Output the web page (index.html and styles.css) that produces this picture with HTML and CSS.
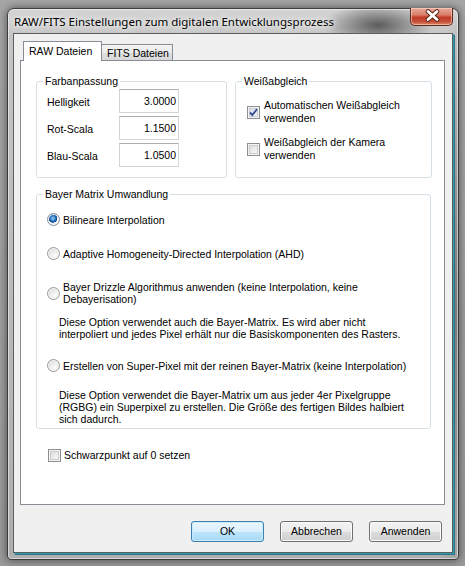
FILE: index.html
```html
<!DOCTYPE html>
<html lang="de">
<head>
<meta charset="utf-8">
<title>RAW/FITS Einstellungen</title>
<link rel="stylesheet" href="styles.css">
</head>
<body>
<div class="window">
  <div class="titlebar">
    <span class="title">RAW/FITS Einstellungen zum digitalen Entwicklungsprozess</span>
    <div class="close">
      <svg width="43" height="18" viewBox="0 0 43 18">
        <path d="M17 4.5 L26 12.5 M26 4.5 L17 12.5" stroke="#5a2418" stroke-width="4.8" stroke-linecap="round"/>
        <path d="M17 4.5 L26 12.5 M26 4.5 L17 12.5" stroke="#ffffff" stroke-width="2.8" stroke-linecap="round"/>
      </svg>
    </div>
  </div>
  <div class="client">
    <div class="tabs">
      <div class="tab active">RAW Dateien</div>
      <div class="tab">FITS Dateien</div>
    </div>
    <div class="panel">
      <div class="row">
        <fieldset class="group g-farb">
          <legend>Farbanpassung</legend>
          <div class="fields">
            <label class="flabel">Helligkeit</label><div class="input">3.0000</div>
            <label class="flabel">Rot-Scala</label><div class="input">1.1500</div>
            <label class="flabel">Blau-Scala</label><div class="input">1.0500</div>
          </div>
        </fieldset>
        <fieldset class="group g-weiss">
          <legend>Weißabgleich</legend>
          <div class="checks">
            <div class="check">
              <span class="box checked">
                <svg width="11" height="11" viewBox="0 0 11 11"><path d="M2 5.5 L4.3 8 L9 2.2" fill="none" stroke="#3a4f95" stroke-width="1.9"/></svg>
              </span>
              <span class="ctext">Automatischen Weißabgleich<br>verwenden</span>
            </div>
            <div class="check second">
              <span class="box"></span>
              <span class="ctext">Weißabgleich der Kamera<br>verwenden</span>
            </div>
          </div>
        </fieldset>
      </div>
      <fieldset class="group g-bayer">
        <legend>Bayer Matrix Umwandlung</legend>
        <div class="radios">
          <div class="radio r1"><span class="dot on"></span><span>Bilineare Interpolation</span></div>
          <div class="radio r2"><span class="dot"></span><span>Adaptive Homogeneity-Directed Interpolation (AHD)</span></div>
          <div class="radio r3"><span class="dot"></span><span>Bayer Drizzle Algorithmus anwenden (keine Interpolation, keine<br>Debayerisation)</span></div>
          <p class="desc d1">Diese Option verwendet auch die Bayer-Matrix. Es wird aber nicht<br>interpoliert und jedes Pixel erhält nur die Basiskomponenten des Rasters.</p>
          <div class="radio r4"><span class="dot"></span><span>Erstellen von Super-Pixel mit der reinen Bayer-Matrix (keine Interpolation)</span></div>
          <p class="desc d2">Diese Option verwendet die Bayer-Matrix um aus jeder 4er Pixelgruppe<br>(RGBG) ein Superpixel zu erstellen. Die Größe des fertigen Bildes halbiert<br>sich dadurch.</p>
        </div>
      </fieldset>
      <div class="check schwarz">
        <span class="box"></span>
        <span class="ctext">Schwarzpunkt auf 0 setzen</span>
      </div>
    </div>
    <div class="buttons">
      <div class="btn default">OK</div>
      <div class="btn">Abbrechen</div>
      <div class="btn">Anwenden</div>
    </div>
  </div>
</div>
</body>
</html>
```
FILE: styles.css
```css
html, body {
  margin: 0;
  padding: 0;
}
body {
  width: 465px;
  height: 566px;
  overflow: hidden;
  background: linear-gradient(to bottom, #a6a6a6, #9a9a9a);
  font-family: "Liberation Sans", Arial, sans-serif;
  font-size: 10.5px;
  color: #000;
}
.window {
  position: relative;
  box-sizing: border-box;
  width: 452px;
  height: 552px;
  margin: 8px 0 0 7px;
  border: 1px solid #3c3c3c;
  border-radius: 7px 7px 4px 4px;
  padding: 0 5px 6px 5px;
  display: flex;
  flex-direction: column;
  background:
    radial-gradient(ellipse 55px 22px at 370px 16px, rgba(55,55,55,0.75), rgba(55,55,55,0) 100%),
    radial-gradient(ellipse 40px 300px at 452px 300px, rgba(60,60,60,0.55), rgba(60,60,60,0) 100%),
    linear-gradient(to bottom, #d3d3d3 0, #c4c4c4 30px, #b9b9b9 300px, #aeaeae 100%);
  box-shadow: 0 0 9px rgba(0,0,0,0.55), inset 0 0 0 1px rgba(255,255,255,0.5);
}
.titlebar {
  height: 24px;
  display: flex;
  align-items: center;
  padding-left: 1px;
}
.title {
  font-family: "Noto Sans", "Open Sans", sans-serif;
  font-size: 11.5px;
  color: #000;
  text-shadow: 0 0 5px #fff, 0 0 9px rgba(255,255,255,0.9), 0 0 14px rgba(255,255,255,0.7);
}
.close {
  position: absolute;
  top: -1px;
  right: 5px;
  width: 43px;
  height: 18px;
  box-sizing: border-box;
  border: 1px solid #5b2a22;
  border-top: none;
  border-radius: 0 0 5px 5px;
  background: linear-gradient(to bottom, #eaa999 0, #d9806c 40%, #c23c27 55%, #c44e36 80%, #de8a68 100%);
  box-shadow: inset 0 0 0 1px rgba(255,220,210,0.55);
}
.close svg {
  display: block;
  margin-top: -1px;
}
.client {
  flex: 1;
  border: 1px solid #5d5d5d;
  background: #f0f0f0;
  padding: 7px 0 0 6px;
  display: flex;
  flex-direction: column;
  box-shadow: 1px 1px 0 #2f9aab, 2px 2px 0 #2b7584;
}
.tabs {
  display: flex;
  align-items: flex-end;
  height: 20px;
  margin: 0 0 -1px 3px;
  position: relative;
  z-index: 1;
}
.tab {
  box-sizing: border-box;
  border: 1px solid #898c95;
  white-space: nowrap;
}
.tab.active {
  width: 79px;
  height: 20px;
  border-bottom: none;
  background: #fff;
  padding: 3px 0 0 5px;
  line-height: 13px;
  position: relative;
  z-index: 2;
}
.tab:not(.active) {
  width: 72px;
  height: 17px;
  margin-left: -1px;
  background: linear-gradient(to bottom, #f3f3f3 0, #ebebeb 50%, #dedede 51%, #d9d9d9 100%);
  padding: 2px 0 0 5px;
  line-height: 13px;
}
.panel {
  box-sizing: border-box;
  width: 425px;
  height: 445px;
  border: 1px solid #898c95;
  background: #fff;
  padding: 14px 0 0 15px;
}
.row {
  display: flex;
  gap: 8px;
}
.group {
  box-sizing: border-box;
  border: 1px solid #d5dfe5;
  border-radius: 3px;
  margin: 0;
  padding: 0;
  min-width: 0;
}
.group legend {
  padding: 0 2px;
  margin-left: 6px;
  line-height: 13px;
}
.g-farb {
  width: 191px;
  height: 103px;
}
.g-weiss {
  width: 197px;
  height: 103px;
}
.fields {
  display: grid;
  grid-template-columns: 72px 60px;
  grid-auto-rows: 24px;
  row-gap: 3px;
  margin: 1px 0 0 10px;
}
.flabel {
  padding-top: 3px;
  line-height: 21px;
}
.input {
  box-sizing: border-box;
  border: 1px solid #d2d4d8;
  border-top-color: #abadb3;
  background: #fff;
  text-align: right;
  padding: 1px 2px 0 0;
  line-height: 20px;
}
.checks {
  margin: 11px 0 0 11px;
}
.check {
  display: flex;
  align-items: center;
  gap: 4px;
  line-height: 13px;
}
.check.second {
  margin-top: 11px;
}
.box {
  flex: none;
  box-sizing: border-box;
  width: 13px;
  height: 13px;
  border: 1px solid #8f8f8f;
  background: linear-gradient(135deg, #d4d4d4 0, #ededed 55%, #fafafa 100%);
  box-shadow: inset 0 0 0 1px #f4f4f4, inset 0 0 0 2px #c9ccd1;
  display: flex;
  align-items: center;
  justify-content: center;
}
.box.checked {
  background: linear-gradient(135deg, #cfd6e6 0, #e8ecf5 55%, #f8f9fc 100%);
}
.box svg {
  display: block;
}
.g-bayer {
  width: 395px;
  height: 241px;
  margin-top: 10px;
}
.radios {
  margin: 12px 0 0 10px;
}
.radio {
  display: flex;
  align-items: center;
  gap: 3px;
  line-height: 12px;
}
.r2, .r3 {
  margin-top: 21px;
}
.r4 {
  margin-top: 19px;
}
.dot {
  flex: none;
  box-sizing: border-box;
  width: 13px;
  height: 13px;
  border-radius: 50%;
  border: 1px solid #9a9a9a;
  background: radial-gradient(circle at 65% 70%, #fdfdfd 0, #ececec 45%, #d2d2d2 100%);
  box-shadow: inset 0 0 0 1px #f6f6f6;
}
.dot.on {
  border-color: #7f8f9f;
  background:
    radial-gradient(circle at 45% 40%, #9fd3f5 0, #2c7cc4 28%, #0b3f86 45%, rgba(11,63,134,0) 50%),
    radial-gradient(circle at 65% 70%, #fdfdfd 0, #e6eaee 45%, #c9d0d8 100%);
}
.desc {
  margin: 0 0 0 12px;
  line-height: 12px;
}
.d1 {
  margin-top: 11px;
}
.d2 {
  margin-top: 17px;
}
.schwarz {
  margin: 20px 0 0 12px;
  gap: 3px;
  line-height: 13px;
}
.buttons {
  display: flex;
  justify-content: flex-end;
  gap: 16px;
  margin: 16px 0 0 0;
  padding-right: 10px;
}
.btn {
  box-sizing: border-box;
  width: 73px;
  height: 21px;
  border: 1px solid #707070;
  border-radius: 3px;
  background: linear-gradient(to bottom, #f2f2f2 0, #ebebeb 50%, #dddddd 51%, #cfcfcf 100%);
  box-shadow: inset 0 0 0 1px #fbfbfb;
  text-align: center;
  line-height: 19px;
}
.btn.default {
  border-color: #3c7fb1;
  background: linear-gradient(to bottom, #eaf6fd 0, #d9f0fc 50%, #bee6fd 51%, #a7d9f5 100%);
  box-shadow: inset 0 0 0 1px #c8ecfd;
}
```
